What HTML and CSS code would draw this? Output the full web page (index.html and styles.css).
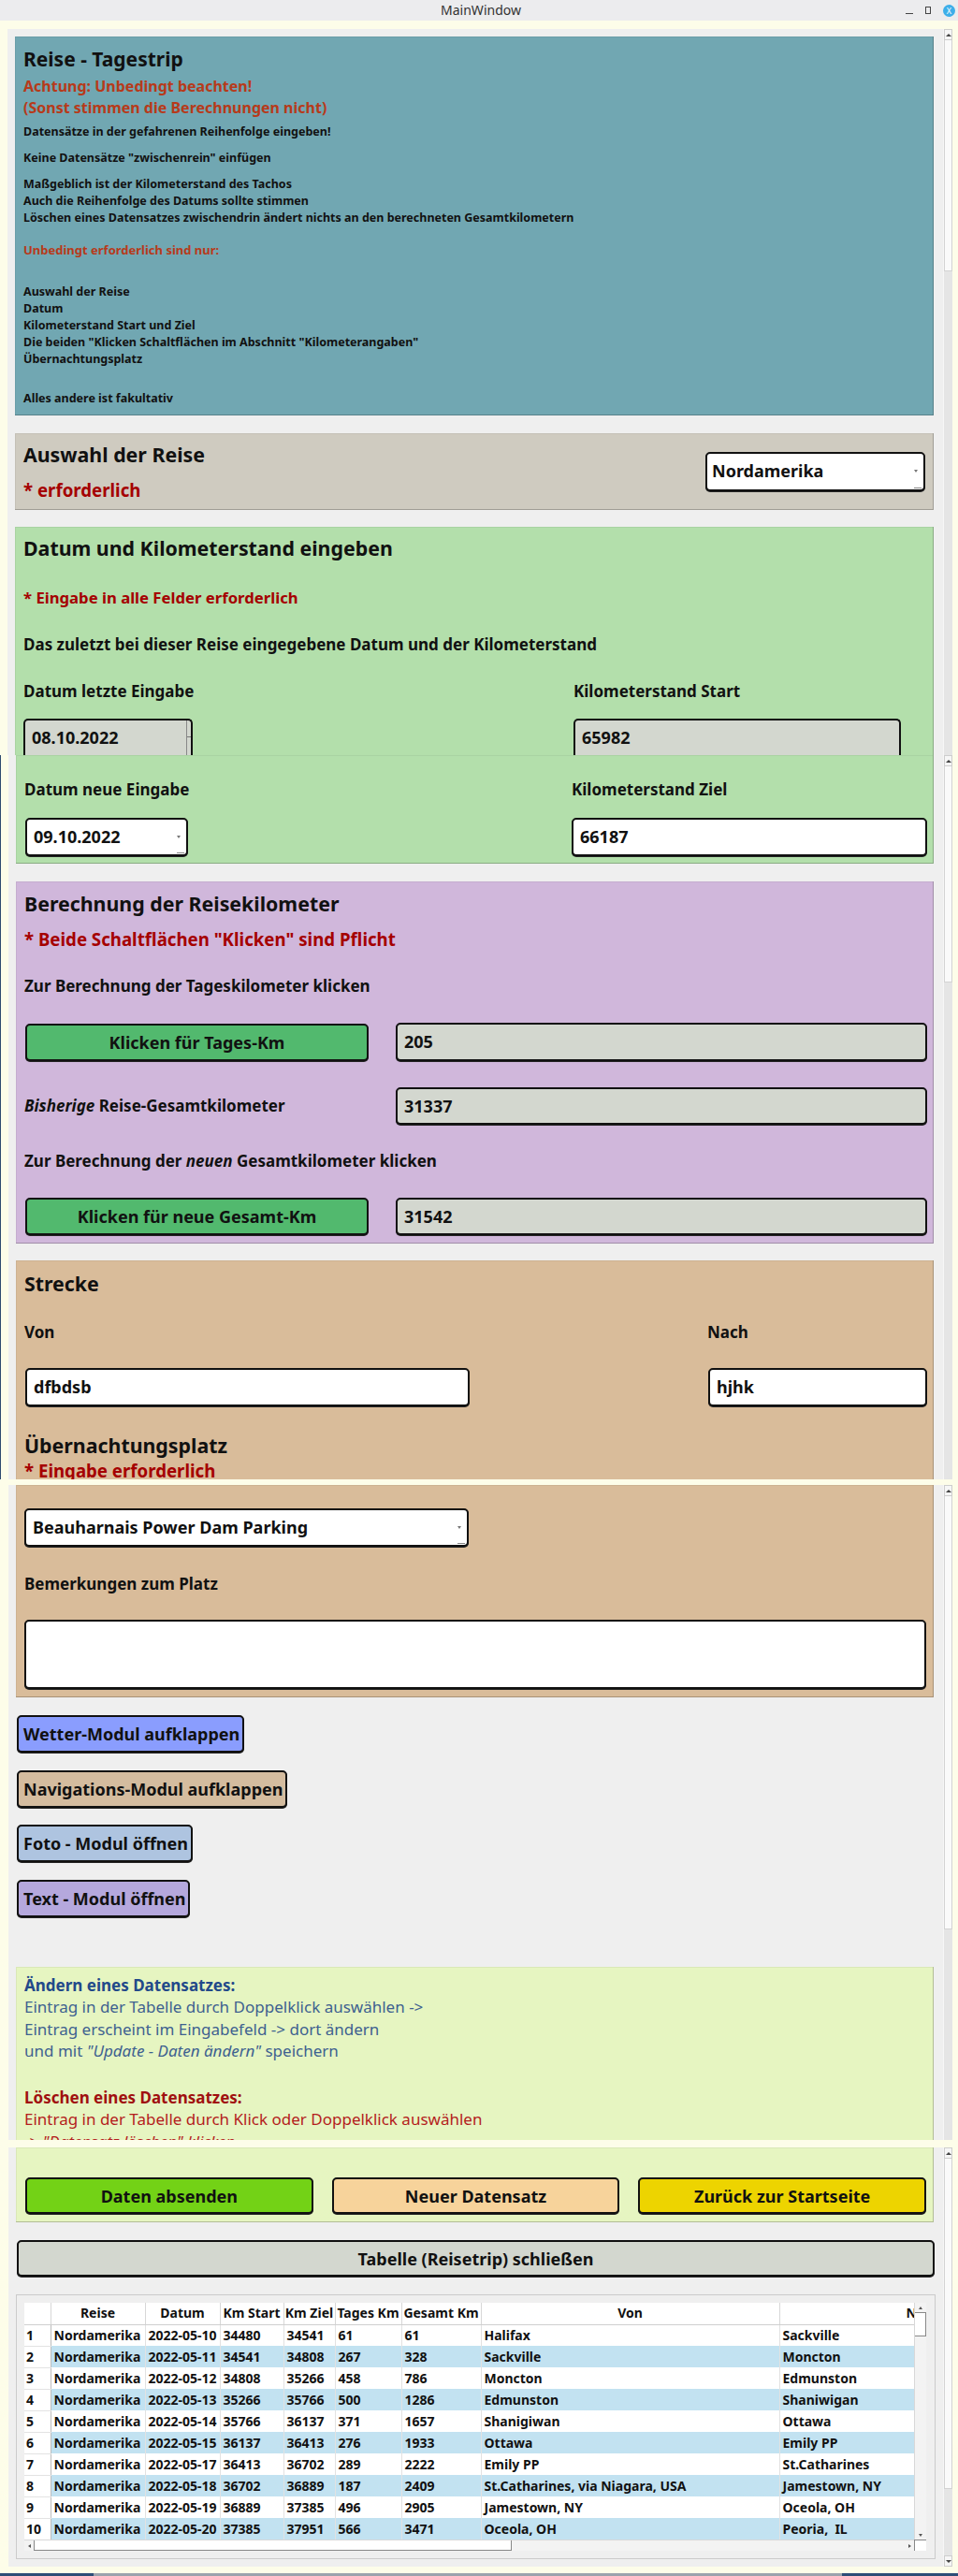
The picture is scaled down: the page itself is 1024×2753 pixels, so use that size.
FILE: index.html
```html
<!DOCTYPE html>
<html lang="de">
<head>
<meta charset="utf-8">
<title>MainWindow</title>
<link rel="stylesheet" href="styles.css">
</head>
<body>
<header class="titlebar">
  <span></span>
  <span class="title">MainWindow</span>
  <div class="wbtns"><span class="wmin"></span><span class="wmax"></span><span class="wclose">X</span></div>
</header>

<!-- Screen 1 -->
<div class="screen s1">
  <div class="panel">
    <section class="box teal">
      <h1>Reise - Tagestrip</h1>
      <p class="warn mt3">Achtung: Unbedingt beachten!</p>
      <p class="warn">(Sonst stimmen die Berechnungen nicht)</p>
      <p class="note mt5">Datensätze in der gefahrenen Reihenfolge eingeben!</p>
      <p class="note mt10">Keine Datensätze "zwischenrein" einfügen</p>
      <p class="note mt10">Maßgeblich ist der Kilometerstand des Tachos</p>
      <p class="note">Auch die Reihenfolge des Datums sollte stimmen</p>
      <p class="note">Löschen eines Datensatzes zwischendrin ändert nichts an den berechneten Gesamtkilometern</p>
      <p class="note tred mt16">Unbedingt erforderlich sind nur:</p>
      <p class="note mt27">Auswahl der Reise</p>
      <p class="note">Datum</p>
      <p class="note">Kilometerstand Start und Ziel</p>
      <p class="note">Die beiden "Klicken Schaltflächen im Abschnitt "Kilometerangaben"</p>
      <p class="note">Übernachtungsplatz</p>
      <p class="note mt24">Alles andere ist fakultativ</p>
    </section>

    <section class="box beige">
      <div>
        <h2>Auswahl der Reise</h2>
        <p class="req r17 mt13">* erforderlich</p>
      </div>
      <div class="field combo reise">Nordamerika</div>
    </section>

    <section class="box green g1">
      <h2>Datum und Kilometerstand eingeben</h2>
      <p class="req r16 mt29">* Eingabe in alle Felder erforderlich</p>
      <p class="lbl mt29">Das zuletzt bei dieser Reise eingegebene Datum und der Kilometerstand</p>
      <div class="pair p1 mt30">
        <div>
          <p class="lbl">Datum letzte Eingabe</p>
          <div class="field ro spin date1 mt19">08.10.2022</div>
        </div>
        <div>
          <p class="lbl">Kilometerstand Start</p>
          <div class="field ro km1 mt19">65982</div>
        </div>
      </div>
    </section>
  </div>
  <div class="vscroll"><span class="up"></span><span class="thumb th1"></span></div>
</div>

<!-- Screen 2 -->
<div class="screen s2">
  <div class="panel">
    <section class="box green g2">
      <div class="pair p2">
        <div>
          <p class="lbl">Datum neue Eingabe</p>
          <div class="field combo date2 mt20">09.10.2022</div>
        </div>
        <div>
          <p class="lbl">Kilometerstand Ziel</p>
          <div class="field km2 mt20">66187</div>
        </div>
      </div>
    </section>

    <section class="box purple">
      <h2>Berechnung der Reisekilometer</h2>
      <p class="req r17 mt13">* Beide Schaltflächen "Klicken" sind Pflicht</p>
      <p class="lbl mt29">Zur Berechnung der Tageskilometer klicken</p>
      <div class="calc mt29">
        <div class="btn kbtn">Klicken für Tages-Km</div>
        <div class="field ro">205</div>
      </div>
      <div class="calc mt28">
        <p class="lbl"><i>Bisherige</i> Reise-Gesamtkilometer</p>
        <div class="field ro h40">31337</div>
      </div>
      <p class="lbl mt29">Zur Berechnung der <i>neuen</i> Gesamtkilometer klicken</p>
      <div class="calc mt29">
        <div class="btn kbtn">Klicken für neue Gesamt-Km</div>
        <div class="field ro h40">31542</div>
      </div>
    </section>

    <section class="box tan t1">
      <h2>Strecke</h2>
      <div class="route mt29">
        <p class="lbl">Von</p>
        <p class="lbl">Nach</p>
        <div class="field von mt28">dfbdsb</div>
        <div class="field nach mt28">hjhk</div>
      </div>
      <h2 class="mt28">Übernachtungsplatz</h2>
      <p class="req r17 mt2">* Eingabe erforderlich</p>
    </section>
  </div>
  <div class="vscroll"><span class="up"></span><span class="thumb th2"></span></div>
</div>

<!-- Screen 3 -->
<div class="screen s3">
  <div class="panel">
    <section class="box tan t2">
      <div class="field combo platz">Beauharnais Power Dam Parking</div>
      <p class="lbl mt30">Bemerkungen zum Platz</p>
      <div class="field memo mt28"></div>
    </section>

    <div class="btn mod wetter">Wetter-Modul aufklappen</div>
    <div class="btn mod navi">Navigations-Modul aufklappen</div>
    <div class="btn mod foto">Foto - Modul öffnen</div>
    <div class="btn mod text">Text - Modul öffnen</div>

    <section class="box lgreen lg1">
      <p class="help hblue hd">Ändern eines Datensatzes:</p>
      <p class="help hblue">Eintrag in der Tabelle durch Doppelklick auswählen -&gt;</p>
      <p class="help hblue">Eintrag erscheint im Eingabefeld -&gt; dort ändern</p>
      <p class="help hblue">und mit <i>"Update - Daten ändern"</i> speichern</p>
      <p class="help hred hd mt27">Löschen eines Datensatzes:</p>
      <p class="help hred">Eintrag in der Tabelle durch Klick oder Doppelklick auswählen</p>
      <p class="help hred">-&gt; <i>"Datensatz löschen" klicken</i></p>
    </section>
  </div>
  <div class="vscroll"><span class="up"></span><span class="thumb th3"></span></div>
</div>

<!-- Screen 4 -->
<div class="screen s4">
  <div class="panel">
    <section class="box lgreen lg2">
      <div class="btn act send">Daten absenden</div>
      <div class="btn act neu">Neuer Datensatz</div>
      <div class="btn act back">Zurück zur Startseite</div>
    </section>

    <div class="btn closetab">Tabelle (Reisetrip) schließen</div>

    <div class="tframe">
      <div class="tview">
        <div class="tclip">
          <table class="grid">
            <colgroup>
              <col class="c0"><col class="c1"><col class="c2"><col class="c3"><col class="c4"><col class="c5"><col class="c6"><col class="c7"><col class="c8">
            </colgroup>
            <thead>
              <tr><th></th><th>Reise</th><th>Datum</th><th>Km Start</th><th>Km Ziel</th><th>Tages Km</th><th>Gesamt Km</th><th>Von</th><th>Nach</th></tr>
            </thead>
            <tbody>
              <tr><th>1</th><td>Nordamerika</td><td>2022-05-10</td><td>34480</td><td>34541</td><td>61</td><td>61</td><td>Halifax</td><td>Sackville</td></tr>
              <tr class="alt"><th>2</th><td>Nordamerika</td><td>2022-05-11</td><td>34541</td><td>34808</td><td>267</td><td>328</td><td>Sackville</td><td>Moncton</td></tr>
              <tr><th>3</th><td>Nordamerika</td><td>2022-05-12</td><td>34808</td><td>35266</td><td>458</td><td>786</td><td>Moncton</td><td>Edmunston</td></tr>
              <tr class="alt"><th>4</th><td>Nordamerika</td><td>2022-05-13</td><td>35266</td><td>35766</td><td>500</td><td>1286</td><td>Edmunston</td><td>Shaniwigan</td></tr>
              <tr><th>5</th><td>Nordamerika</td><td>2022-05-14</td><td>35766</td><td>36137</td><td>371</td><td>1657</td><td>Shanigiwan</td><td>Ottawa</td></tr>
              <tr class="alt"><th>6</th><td>Nordamerika</td><td>2022-05-15</td><td>36137</td><td>36413</td><td>276</td><td>1933</td><td>Ottawa</td><td>Emily PP</td></tr>
              <tr><th>7</th><td>Nordamerika</td><td>2022-05-17</td><td>36413</td><td>36702</td><td>289</td><td>2222</td><td>Emily PP</td><td>St.Catharines</td></tr>
              <tr class="alt"><th>8</th><td>Nordamerika</td><td>2022-05-18</td><td>36702</td><td>36889</td><td>187</td><td>2409</td><td>St.Catharines, via Niagara, USA</td><td>Jamestown, NY</td></tr>
              <tr><th>9</th><td>Nordamerika</td><td>2022-05-19</td><td>36889</td><td>37385</td><td>496</td><td>2905</td><td>Jamestown, NY</td><td>Oceola, OH</td></tr>
              <tr class="alt"><th>10</th><td>Nordamerika</td><td>2022-05-20</td><td>37385</td><td>37951</td><td>566</td><td>3471</td><td>Oceola, OH</td><td>Peoria,&nbsp; IL</td></tr>
            </tbody>
          </table>
        </div>
        <div class="tvs"><span class="au"></span><span class="tthumb"></span><span class="fill"></span><span class="ad"></span></div>
        <div class="ths"><span class="al"></span><span class="hthumb"></span><span class="fill"></span><span class="ar"></span></div>
        <div class="corner"></div>
      </div>
    </div>
  </div>
  <div class="vscroll"><span class="up"></span><span class="thumb th4"></span><span class="fill"></span><span class="down"></span></div>
</div>
<div class="taskbar"></div>
</body>
</html>
```

FILE: styles.css
```css
* { box-sizing: border-box; margin: 0; padding: 0; }
html, body { background: #fdfde9; }
body {
  width: 1024px;
  font-family: "Noto Sans", "Open Sans", "DejaVu Sans", sans-serif;
  font-weight: 700;
  color: #111;
}

/* title bar */
.titlebar {
  height: 22px;
  background: #ececee;
  display: grid;
  grid-template-columns: 1fr auto 1fr;
  align-items: center;
}
.title { font-size: 14px; font-weight: 400; color: #333; line-height: 22px; padding-left: 4px; }
.wbtns { justify-self: end; display: flex; align-items: center; gap: 0; padding-right: 3px; }
.wmin { width: 8px; height: 1px; background: #444; margin-top: 6px; margin-right: 13px; }
.wmax { width: 6px; height: 8px; border: 1px solid #444; margin-right: 13px; }
.wclose {
  width: 13px; height: 13px; border-radius: 50%; background: #3daee9; color: #fff;
  font-size: 9px; line-height: 13px; text-align: center; font-weight: 400;
}

/* screens */
.screen { display: flex; overflow: hidden; padding-left: 8px; padding-right: 6px; }
.s1 { height: 785px; padding-top: 9px; }
.s2 { height: 774px; border-left: 1px solid #2e4b70; }
.s3 { height: 706px; padding-top: 6px; padding-left: 9px; }
.s4 { height: 463px; padding-top: 8px; padding-left: 9px; padding-bottom: 7px; }
.taskbar { height: 3px; background: linear-gradient(90deg, #2d4d77 0 100px, #9ba3ad 100px 900px, #2d4d77 900px); }

.panel {
  flex: 1;
  background: #efefef;
  padding: 8px 10px 0 8px;
  display: flex;
  flex-direction: column;
  gap: 19px;
}
.s2 .panel, .s3 .panel { padding-top: 0; }
.s4 .panel { padding-top: 0; padding-bottom: 8px; }
.panel > * { flex-shrink: 0; }

.vscroll { width: 10px; background: #e5e5e5; display: flex; flex-direction: column; border-left: 1px solid #f7f7f7; }
.vscroll .up, .vscroll .down {
  height: 12px; background: #f6f6f6; border: 1px solid #cdcdcd;
  display: flex; align-items: center; justify-content: center; flex-shrink: 0;
}
.vscroll .up::before { content: ""; border-left: 3px solid transparent; border-right: 3px solid transparent; border-bottom: 3px solid #444; }
.vscroll .down::before { content: ""; border-left: 3px solid transparent; border-right: 3px solid transparent; border-top: 3px solid #444; }
.vscroll .thumb { background: #fafafa; border: 1px solid #d3d3d3; border-top: none; flex-shrink: 0; }
.vscroll .fill { flex: 1; }
.th1 { height: 247px; }
.th2 { height: 231px; }
.th3 { height: 463px; }
.th4 { height: 353px; }

/* sections */
.box {
  padding: 0 7px 0 9px;
  box-shadow: inset 0 0 0 1px rgba(0,0,0,0.05), inset -1px -1px 0 rgba(0,0,0,0.18);
}
.teal { background: #71a7b2; padding-top: 9px; padding-bottom: 9px; }
.beige { background: #cfcbc0; padding-top: 9px; padding-bottom: 10px; padding-right: 9px; display: flex; justify-content: space-between; align-items: flex-start; }
.green { background: #b3dfab; }
.g1 { padding-top: 9px; margin-top: -1px; }
.g2 { padding-top: 27px; padding-bottom: 8px; }
.purple { background: #d0b7db; padding-top: 10px; padding-bottom: 9px; }
.tan { background: #d9bc9a; }
.t1 { padding-top: 11px; margin-top: -1px; }
.t2 { padding-top: 25px; padding-bottom: 9px; }
.lgreen { background: #e6f5c1; }
.lg1 { padding-top: 8px; margin-top: 34px; }
.lg2 { padding: 32px 8px 9px 10px; display: grid; grid-template-columns: 1fr 1fr 1fr; gap: 20px; }

/* text */
h1 { font-size: 21px; line-height: 30px; font-weight: 700; }
h2 { font-size: 21.33px; line-height: 27px; font-weight: 700; }
.warn { font-size: 16px; line-height: 23px; color: #b73a1a; }
.note { font-size: 12.5px; line-height: 18px; }
.note.tred { color: #b73a1a; font-size: 13px; }
.req { color: #a50000; }
.r17 { font-size: 18.67px; line-height: 23px; }
.r16 { font-size: 16.7px; line-height: 22px; }
.lbl { font-size: 17px; line-height: 20px; }
i { font-style: italic; }

.help { font-size: 17px; line-height: 23.3px; font-weight: 400; }
.help.hd { font-weight: 700; }
.hblue { color: #3e6190; }
.hblue.hd { color: #22498a; }
.hred { color: #b41d1d; }
.hred.hd { color: #a01010; }

.mt2 { margin-top: 2px; }
.mt3 { margin-top: 3px; }
.mt5 { margin-top: 5px; }
.mt10 { margin-top: 10px; }
.mt13 { margin-top: 13px; }
.mt16 { margin-top: 16px; }
.mt19 { margin-top: 19px; }
.mt20 { margin-top: 20px; }
.mt24 { margin-top: 24px; }
.mt27 { margin-top: 27px; }
.mt28 { margin-top: 28px; }
.mt29 { margin-top: 29px; }
.mt30 { margin-top: 30px; }

/* fields */
.field {
  position: relative;
  height: 41px;
  border: 2px solid #111;
  border-radius: 5px;
  background: #fff;
  font-size: 18px;
  line-height: 36px;
  padding-left: 7px;
  box-shadow: 0 1px 0 #222;
  white-space: nowrap;
}
.field.h40 { height: 40px; }
.field.ro { background: #d3d7cf; }
.combo::after {
  content: "";
  position: absolute;
  right: 6px; top: 17px;
  border-left: 2px solid transparent; border-right: 2px solid transparent; border-top: 3px solid #777;
}
.combo::before {
  content: "";
  position: absolute;
  right: 2px; bottom: 1px;
  width: 8px; height: 1px; background: #888;
}
.spin::after {
  content: "";
  position: absolute;
  right: 4px; top: 0; bottom: 0;
  width: 1px; background: #888;
}
.spin::before {
  content: "";
  position: absolute;
  right: 0; top: 17px;
  width: 5px; height: 1px; background: #777;
}
.reise { width: 235px; height: 42px; margin-top: 11px; padding-left: 5px; }
.pair { display: grid; }
.p1 { grid-template-columns: 588px 1fr; }
.p2 { grid-template-columns: 585px 1fr; }
.date1 { width: 181px; border-bottom: none; border-radius: 5px 5px 0 0; box-shadow: none; }
.km1 { width: 350px; border-bottom: none; border-radius: 5px 5px 0 0; box-shadow: none; }
.date2 { width: 174px; margin-left: 1px; }
.km2 { width: 380px; }

.calc { display: grid; grid-template-columns: 397px 1fr; align-items: center; }

.route { display: grid; grid-template-columns: 730px 1fr; }
.von { width: 475px; margin-left: 1px; }
.nach { width: 234px; margin-left: 1px; }
.platz { width: 475px; }
.memo { width: 964px; height: 74px; }

/* buttons */
.btn {
  height: 40px;
  border: 2px solid #111;
  border-radius: 5px;
  font-size: 18px;
  font-weight: 700;
  display: flex;
  align-items: center;
  justify-content: center;
  box-shadow: 0 1px 0 #222;
  white-space: nowrap;
}
.kbtn { width: 367px; margin-left: 1px; background: #52b96e; }
.mod { align-self: flex-start; justify-content: flex-start; padding: 0 3px 0 5px; margin-left: 1px; }
.wetter { background: #8a9dfe; }
.navi { background: #d4bc9f; }
.foto { background: #aec4e0; margin-top: -1px; }
.text { background: #b5a8dd; }
.act { height: 39px; }
.send { background: #73d216; }
.neu { background: #f7d39b; }
.back { background: #edd400; }
.closetab { background: #d3d7cf; height: 39px; margin: 0 -1px 0 1px; }

/* table */
.tframe {
  height: 283px;
  margin: 0 -2px 0 0;
  border: 1px solid #cbcbcb;
  padding: 8px 9px 0 8px;
}
.tview {
  width: 964px;
  display: grid;
  grid-template-columns: 951px 13px;
  grid-template-rows: 253px 12px;
  background: #fff;
}
.tclip { overflow: hidden; width: 951px; height: 253px; }
.grid {
  border-collapse: collapse;
  table-layout: fixed;
  width: 1114px;
  font-size: 14px;
  font-weight: 700;
}
.c0 { width: 28px; } .c1 { width: 101px; } .c2 { width: 80px; } .c3 { width: 68px; } .c4 { width: 55px; }
.c5 { width: 71px; } .c6 { width: 85px; } .c7 { width: 319px; } .c8 { width: 307px; }
.grid thead th {
  height: 23px;
  text-align: center;
  border-right: 1px solid #d7d7d7;
  border-bottom: 1px solid #cfcfcf;
  white-space: nowrap;
  overflow: hidden;
  line-height: 22px;
  padding: 0;
  background: #fff;
}
.grid tbody th {
  height: 23px;
  text-align: left;
  padding: 0 0 0 2px;
  border-right: 1px solid #bdbdbd;
  border-bottom: 1px solid #e3e3e3;
  background: #fff;
  font-size: 14px;
}
.grid td {
  height: 23px;
  padding: 0 0 0 3px;
  white-space: nowrap;
  overflow: hidden;
  border-right: 1px solid #e2e2e2;
  line-height: 22px;
}
.grid tr.alt td { background: #c2e2f1; }

.tvs { display: flex; flex-direction: column; background: #f3f3f3; border-left: 1px solid #d8d8d8; }
.ths { display: flex; background: #f3f3f3; border-top: 1px solid #d8d8d8; }
.corner { background: #fff; border-left: 1px solid #888; border-top: 1px solid #888; }
.tvs .fill, .ths .fill { flex: 1; }
.au, .ad { height: 10px; display: flex; align-items: center; justify-content: center; }
.au::before { content: ""; border-left: 2px solid transparent; border-right: 2px solid transparent; border-bottom: 3px solid #555; }
.ad::before { content: ""; border-left: 2px solid transparent; border-right: 2px solid transparent; border-top: 3px solid #555; }
.tthumb { height: 26px; background: #fff; border: 1px solid #888; border-left: none; }
.al, .ar { width: 10px; display: flex; align-items: center; justify-content: center; }
.al::before { content: ""; border-top: 2px solid transparent; border-bottom: 2px solid transparent; border-right: 3px solid #555; }
.ar::before { content: ""; border-top: 2px solid transparent; border-bottom: 2px solid transparent; border-left: 3px solid #555; }
.hthumb { width: 511px; background: #fff; border: 1px solid #888; border-top: none; }
```
